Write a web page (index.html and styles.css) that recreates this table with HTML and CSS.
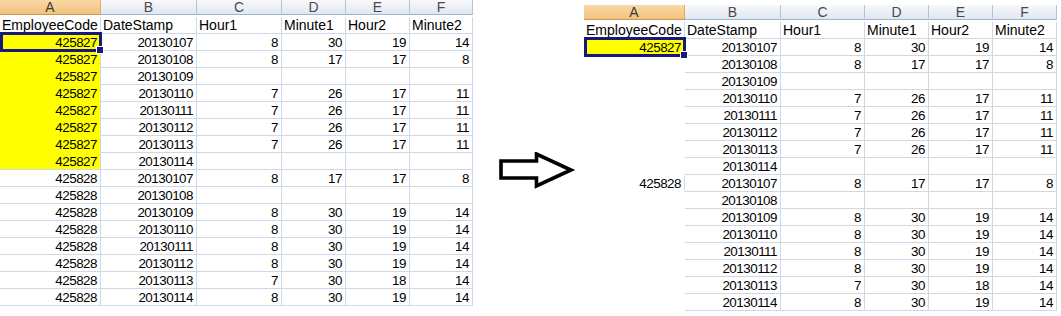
FILE: index.html
```html
<!DOCTYPE html>
<html>
<head>
<meta charset="utf-8">
<link rel="stylesheet" href="styles.css">
</head>
<body>
<div class="page">
  <div class="sheet left">
    <div class="h hsel">A</div><div class="h">B</div><div class="h">C</div><div class="h">D</div><div class="h">E</div><div class="h">F</div>
    <div class="c">EmployeeCode</div><div class="c">DateStamp</div><div class="c">Hour1</div><div class="c">Minute1</div><div class="c">Hour2</div><div class="c">Minute2</div>
    <div class="n y sel">425827</div><div class="n">20130107</div><div class="n">8</div><div class="n">30</div><div class="n">19</div><div class="n">14</div>
    <div class="n y">425827</div><div class="n">20130108</div><div class="n">8</div><div class="n">17</div><div class="n">17</div><div class="n">8</div>
    <div class="n y">425827</div><div class="n">20130109</div><div class="n"></div><div class="n"></div><div class="n"></div><div class="n"></div>
    <div class="n y">425827</div><div class="n">20130110</div><div class="n">7</div><div class="n">26</div><div class="n">17</div><div class="n">11</div>
    <div class="n y">425827</div><div class="n">20130111</div><div class="n">7</div><div class="n">26</div><div class="n">17</div><div class="n">11</div>
    <div class="n y">425827</div><div class="n">20130112</div><div class="n">7</div><div class="n">26</div><div class="n">17</div><div class="n">11</div>
    <div class="n y">425827</div><div class="n">20130113</div><div class="n">7</div><div class="n">26</div><div class="n">17</div><div class="n">11</div>
    <div class="n y ylast">425827</div><div class="n">20130114</div><div class="n"></div><div class="n"></div><div class="n"></div><div class="n"></div>
    <div class="n">425828</div><div class="n">20130107</div><div class="n">8</div><div class="n">17</div><div class="n">17</div><div class="n">8</div>
    <div class="n">425828</div><div class="n">20130108</div><div class="n"></div><div class="n"></div><div class="n"></div><div class="n"></div>
    <div class="n">425828</div><div class="n">20130109</div><div class="n">8</div><div class="n">30</div><div class="n">19</div><div class="n">14</div>
    <div class="n">425828</div><div class="n">20130110</div><div class="n">8</div><div class="n">30</div><div class="n">19</div><div class="n">14</div>
    <div class="n">425828</div><div class="n">20130111</div><div class="n">8</div><div class="n">30</div><div class="n">19</div><div class="n">14</div>
    <div class="n">425828</div><div class="n">20130112</div><div class="n">8</div><div class="n">30</div><div class="n">19</div><div class="n">14</div>
    <div class="n">425828</div><div class="n">20130113</div><div class="n">7</div><div class="n">30</div><div class="n">18</div><div class="n">14</div>
    <div class="n">425828</div><div class="n">20130114</div><div class="n">8</div><div class="n">30</div><div class="n">19</div><div class="n">14</div>
  </div>

  <div class="arrow-zone">
    <svg class="arrow" width="78" height="40" viewBox="0 0 78 40">
      <polygon points="2,9 37.5,9 37.5,2 72,18 37.5,34 37.5,26 2,26" fill="#fff" stroke="#000" stroke-width="3.6" stroke-linejoin="miter"/>
    </svg>
  </div>

  <div class="sheet right">
    <div class="h hsel">A</div><div class="h">B</div><div class="h">C</div><div class="h">D</div><div class="h">E</div><div class="h">F</div>
    <div class="c">EmployeeCode</div><div class="c">DateStamp</div><div class="c">Hour1</div><div class="c">Minute1</div><div class="c">Hour2</div><div class="c">Minute2</div>
    <div class="n y ylast sel">425827</div><div class="n">20130107</div><div class="n">8</div><div class="n">30</div><div class="n">19</div><div class="n">14</div>
    <div class="n blank"></div><div class="n">20130108</div><div class="n">8</div><div class="n">17</div><div class="n">17</div><div class="n">8</div>
    <div class="n blank"></div><div class="n">20130109</div><div class="n"></div><div class="n"></div><div class="n"></div><div class="n"></div>
    <div class="n blank"></div><div class="n">20130110</div><div class="n">7</div><div class="n">26</div><div class="n">17</div><div class="n">11</div>
    <div class="n blank"></div><div class="n">20130111</div><div class="n">7</div><div class="n">26</div><div class="n">17</div><div class="n">11</div>
    <div class="n blank"></div><div class="n">20130112</div><div class="n">7</div><div class="n">26</div><div class="n">17</div><div class="n">11</div>
    <div class="n blank"></div><div class="n">20130113</div><div class="n">7</div><div class="n">26</div><div class="n">17</div><div class="n">11</div>
    <div class="n blank"></div><div class="n">20130114</div><div class="n"></div><div class="n"></div><div class="n"></div><div class="n"></div>
    <div class="n blank edge">425828</div><div class="n">20130107</div><div class="n">8</div><div class="n">17</div><div class="n">17</div><div class="n">8</div>
    <div class="n blank"></div><div class="n">20130108</div><div class="n"></div><div class="n"></div><div class="n"></div><div class="n"></div>
    <div class="n blank"></div><div class="n">20130109</div><div class="n">8</div><div class="n">30</div><div class="n">19</div><div class="n">14</div>
    <div class="n blank"></div><div class="n">20130110</div><div class="n">8</div><div class="n">30</div><div class="n">19</div><div class="n">14</div>
    <div class="n blank"></div><div class="n">20130111</div><div class="n">8</div><div class="n">30</div><div class="n">19</div><div class="n">14</div>
    <div class="n blank"></div><div class="n">20130112</div><div class="n">8</div><div class="n">30</div><div class="n">19</div><div class="n">14</div>
    <div class="n blank"></div><div class="n">20130113</div><div class="n">7</div><div class="n">30</div><div class="n">18</div><div class="n">14</div>
    <div class="n blank"></div><div class="n">20130114</div><div class="n">8</div><div class="n">30</div><div class="n">19</div><div class="n">14</div>
  </div>
</div>
</body>
</html>
```

FILE: styles.css
```css
* { box-sizing: border-box; }
html, body { margin: 0; padding: 0; background: #fff; }
body { font-family: "Liberation Sans", Arial, sans-serif; color: #000; }

.page {
  display: flex;
  align-items: flex-start;
  width: 1061px;
  height: 316px;
  overflow: hidden;
}

.sheet {
  display: grid;
  grid-template-columns: 101px 96px 85px 64px 64px 63px;
  grid-auto-rows: 17px;
}
.sheet.right {
  grid-template-columns: 101px 96px 84px 64px 64px 64px;
  margin-top: 5px;
}

.h {
  height: 15px;
  font-size: 14px;
  line-height: 15px;
  text-align: center;
  color: #4a4a4a;
  background: linear-gradient(#f7f9fc, #e1e7ef);
  border-right: 1px solid #b4c4d8;
  border-bottom: 1px solid #9eb6ce;
}
.h.hsel {
  background: linear-gradient(#f9d9a6, #f2c27c);
  border-right-color: #e2a95f;
  border-bottom-color: #c99a57;
  color: #3a3a3a;
}

.c, .n {
  border-right: 1px solid #d0d7e5;
  border-bottom: 1px solid #d0d7e5;
  white-space: nowrap;
  overflow: visible;
}
.c {
  font-size: 14px;
  line-height: 16px;
  padding-left: 2px;
}
.n {
  font-size: 13.4px;
  letter-spacing: -0.5px;
  line-height: 17px;
  text-align: right;
  padding-right: 3px;
}

.y { background: #ffff00; border-bottom-color: #ffff00; }
.y.ylast { border-bottom-color: #d0d7e5; }

.sel { position: relative; }
.sel::after {
  content: "";
  position: absolute;
  top: -2px;
  left: 0;
  right: -2px;
  bottom: -2px;
  border: 3px solid #17197e;
}
.sel::before {
  content: "";
  position: absolute;
  right: -4px;
  bottom: -4px;
  width: 6px;
  height: 6px;
  background: #17197e;
  border: 1px solid #fff;
  z-index: 2;
}

.blank { border-color: transparent; background: #fff; }
.blank.edge { border-right-color: #d0d7e5; }

.arrow-zone {
  width: 111px;
  flex: none;
  padding-top: 152px;
  padding-left: 26px;
}
.arrow { display: block; }
```
